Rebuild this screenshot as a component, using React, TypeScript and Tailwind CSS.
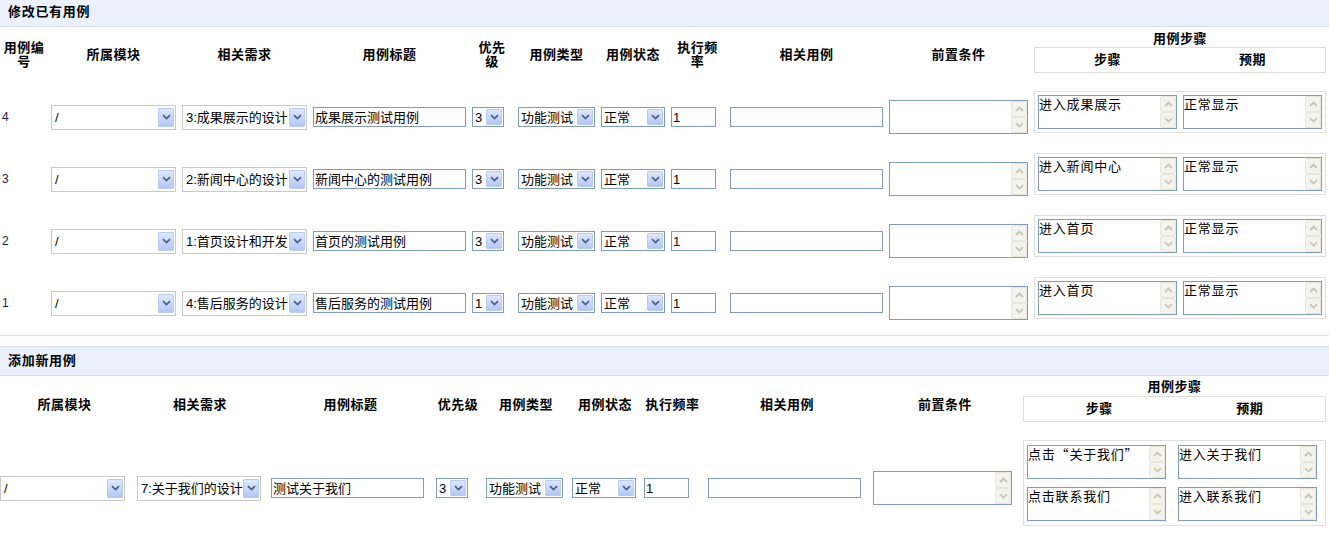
import React from "react";

type Row = { id: number; req: string; title: string; pri: string; step: string; expect: string };

const rows: Row[] = [
  { id: 4, req: "3:成果展示的设计", title: "成果展示测试用例", pri: "3", step: "进入成果展示", expect: "正常显示" },
  { id: 3, req: "2:新闻中心的设计", title: "新闻中心的测试用例", pri: "3", step: "进入新闻中心", expect: "正常显示" },
  { id: 2, req: "1:首页设计和开发", title: "首页的测试用例", pri: "3", step: "进入首页", expect: "正常显示" },
  { id: 1, req: "4:售后服务的设计", title: "售后服务的测试用例", pri: "1", step: "进入首页", expect: "正常显示" },
];

const Chevron = ({ up, color }: { up?: boolean; color: string }) => (
  <svg width="9" height="6" viewBox="0 0 9 6">
    <path
      d={up ? "M1 5 L4.5 1.5 L8 5" : "M1 1.2 L4.5 4.6 L8 1.2"}
      fill="none"
      stroke={color}
      strokeWidth="1.8"
    />
  </svg>
);

const DropBtn = ({ tall }: { tall?: boolean }) => (
  <span
    className={`flex w-[16px] shrink-0 items-center justify-center rounded-[1px] border border-[#b8cbf4] bg-linear-to-b from-[#dde7fe] to-[#b3c7f6] ${
      tall ? "h-[19px]" : "h-[16px]"
    }`}
  >
    <Chevron color="#4d6185" />
  </span>
);

// fake select box, old XP look
function Sel({ text, w, tall, ml }: { text: string; w: string; tall?: boolean; ml?: string }) {
  return (
    <div
      className={`flex items-center justify-between bg-white ${w} ${ml ?? ""} ${
        tall
          ? "h-[25px] border border-[#c9c9c9] pl-[3px] pr-[1px]"
          : "h-[20px] border border-[#7f9db9] pl-[2px] pr-[1px]"
      }`}
    >
      <span className="whitespace-nowrap text-[13px] leading-none text-black">{text}</span>
      <DropBtn tall={tall} />
    </div>
  );
}

function Txt({ value, w, ml }: { value: string; w: string; ml?: string }) {
  return (
    <div
      className={`flex h-[20px] items-center whitespace-nowrap border border-[#7f9db9] bg-white pl-[1px] text-[13px] leading-none text-black ${w} ${ml ?? ""}`}
    >
      {value}
    </div>
  );
}

const ScrollBtn = ({ up }: { up?: boolean }) => (
  <span className="flex h-[16px] w-[16px] items-center justify-center rounded-[2px] border border-[#e9e7db] bg-[#f4f3ec]">
    <Chevron up={up} color="#c9c6b8" />
  </span>
);

function Area({ text, w, ml }: { text: string; w: string; ml?: string }) {
  return (
    <div className={`flex h-[34px] border border-[#7f9db9] bg-white ${w} ${ml ?? ""}`}>
      <div className="flex-1 whitespace-nowrap font-['Noto_Sans_CJK_SC',sans-serif] text-[13px] leading-[16px] tracking-[0.8px] text-black">
        {text}
      </div>
      <div className="flex w-[16px] flex-col">
        <ScrollBtn up />
        <ScrollBtn />
      </div>
    </div>
  );
}

const H = ({ children }: { children: React.ReactNode }) => (
  <div className="flex h-[59px] items-center justify-center pb-[3px] text-center text-[13px] font-bold leading-[14px] tracking-[0.5px] text-black">
    <span>{children}</span>
  </div>
);

const H2 = ({ children }: { children: React.ReactNode }) => (
  <div className="flex h-[58px] items-center justify-center text-center text-[13px] font-bold leading-[14px] tracking-[0.5px] text-black">
    <span>{children}</span>
  </div>
);

const StepHead = () => (
  <div className="grid h-[26px] w-full grid-cols-2 items-center border border-[#dfdfdf] text-center text-[13px] font-bold tracking-[0.5px]">
    <span>步骤</span>
    <span>预期</span>
  </div>
);

export default function App() {
  return (
    <div className="h-[538px] w-full overflow-hidden bg-white font-['Liberation_Sans','Noto_Sans_CJK_SC',sans-serif] text-black">
      {/* 修改已有用例 */}
      <div className="flex h-[27px] items-center border-b border-[#dadde3] bg-[#ebf1fc] pb-[2px] pl-[8px] text-[13px] font-bold tracking-[0.7px]">
        修改已有用例
      </div>

      <div className="grid grid-cols-[48px_131px_131px_159px_46px_83px_70px_59px_159px_145px_298px]">
        <H>
          用例编
          <br />号
        </H>
        <H>所属模块</H>
        <H>相关需求</H>
        <H>用例标题</H>
        <H>
          优先
          <br />级
        </H>
        <H>用例类型</H>
        <H>用例状态</H>
        <H>
          执行频
          <br />率
        </H>
        <H>相关用例</H>
        <H>前置条件</H>
        <div className="flex h-[59px] flex-col items-center pt-[5px]">
          <span className="text-[13px] font-bold leading-[14px] tracking-[0.5px]">用例步骤</span>
          <div className="mt-[1px] w-[292px]">
            <StepHead />
          </div>
        </div>
      </div>

      {rows.map((r) => (
        <div
          key={r.id}
          className="grid h-[62px] grid-cols-[48px_131px_131px_159px_46px_83px_70px_59px_159px_145px_298px] items-center"
        >
          <div className="pl-[2px] text-[12px] text-[#1f1a3d]">{r.id}</div>
          <Sel tall text="/" w="w-[125px]" ml="ml-[3px]" />
          <Sel tall text={r.req} w="w-[125px]" ml="ml-[3px]" />
          <Txt value={r.title} w="w-[153px]" ml="ml-[3px]" />
          <Sel text={r.pri} w="w-[32px]" ml="ml-[3px]" />
          <Sel text="功能测试" w="w-[77px]" ml="ml-[3px]" />
          <Sel text="正常" w="w-[64px]" ml="ml-[3px]" />
          <Txt value="1" w="w-[45px]" ml="ml-[3px]" />
          <Txt value="" w="w-[153px]" ml="ml-[3px]" />
          <Area text="" w="w-[139px]" ml="ml-[3px]" />
          <div className="mb-[10px] ml-[3px] flex w-[292px] gap-[6px] border border-[#dfdfdf] p-[3px]">
            <Area text={r.step} w="w-[139px]" />
            <Area text={r.expect} w="w-[139px]" />
          </div>
        </div>
      ))}

      <div className="h-[2px] border-b border-[#e2e2e2]" />
      <div className="h-[10px]" />

      {/* 添加新用例 */}
      <div className="flex h-[30px] items-center border-y border-[#dadde3] bg-[#ebf1fc] pl-[8px] text-[13px] font-bold tracking-[0.7px]">
        添加新用例
      </div>

      <div className="grid grid-cols-[129px_142px_159px_56px_80px_78px_57px_172px_144px_312px]">
        <H2>所属模块</H2>
        <H2>相关需求</H2>
        <H2>用例标题</H2>
        <H2>优先级</H2>
        <H2>用例类型</H2>
        <H2>用例状态</H2>
        <H2>执行频率</H2>
        <H2>相关用例</H2>
        <H2>前置条件</H2>
        <div className="ml-[6px] flex h-[58px] w-[303px] flex-col items-center pt-[4px]">
          <span className="text-[13px] font-bold leading-[14px] tracking-[0.5px]">用例步骤</span>
          <div className="mt-[2px] w-full">
            <StepHead />
          </div>
        </div>
      </div>

      <div className="grid h-[104px] grid-cols-[129px_142px_159px_56px_80px_78px_57px_172px_144px_312px] items-center pt-[4px]">
        <Sel tall text="/" w="w-[125px]" />
        <Sel tall text="7:关于我们的设计" w="w-[124px]" ml="ml-[8px]" />
        <Txt value="测试关于我们" w="w-[153px]" />
        <Sel text="3" w="w-[32px]" ml="ml-[6px]" />
        <Sel text="功能测试" w="w-[77px]" />
        <Sel text="正常" w="w-[64px]" ml="ml-[6px]" />
        <Txt value="1" w="w-[45px]" />
        <Txt value="" w="w-[153px]" ml="ml-[7px]" />
        <Area text="" w="w-[139px]" />
        <div className="mb-[10px] ml-[6px] grid w-[303px] grid-cols-[139px_139px] gap-x-[12px] gap-y-[8px] border border-[#dfdfdf] py-[4px] pl-[3px] pr-[8px]">
          <Area text="点击“关于我们”" w="w-[139px]" />
          <Area text="进入关于我们" w="w-[139px]" />
          <Area text="点击联系我们" w="w-[139px]" />
          <Area text="进入联系我们" w="w-[139px]" />
        </div>
      </div>
    </div>
  );
}
